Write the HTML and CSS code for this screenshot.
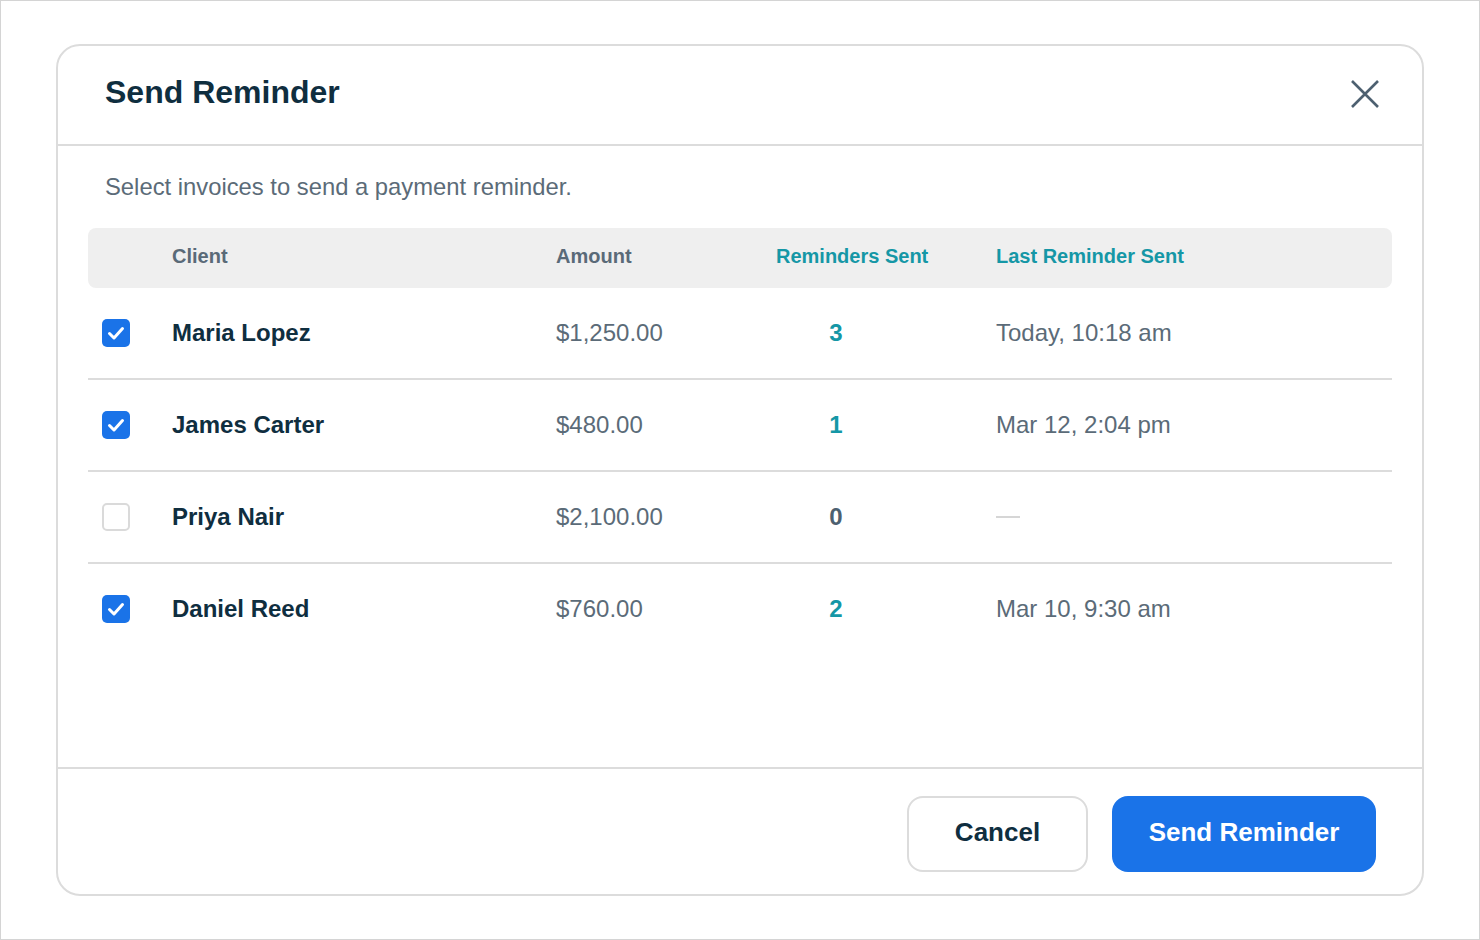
FILE: index.html
```html
<!DOCTYPE html>
<html lang="en">
<head>
  <meta charset="UTF-8" />
  <meta name="viewport" content="width=device-width, initial-scale=1.0"/>
  <title>Send Reminder</title>
  <link rel="stylesheet" href="styles.css">
</head>
<body>

<div class="frame">
  <div class="dialog">
    <div class="dialog-header">
      <h1>Send Reminder</h1>
      <button class="close" aria-label="Close">
        <svg width="30" height="30" viewBox="0 0 30 30"><path d="M2 2 L28 28 M28 2 L2 28" stroke="#4d6070" stroke-width="2.6" fill="none"/></svg>
      </button>
    </div>

    <div class="dialog-body">
      <p class="intro">Select invoices to send a payment reminder.</p>

      <div class="grid">
        <div class="row head">
          <div></div>
          <div>Client</div>
          <div>Amount</div>
          <div class="teal">Reminders Sent</div>
          <div class="teal">Last Reminder Sent</div>
        </div>

        <div class="row">
          <div><span class="check on"><svg width="28" height="28" viewBox="0 0 28 28"><path d="M7.5 14.5 L12 19 L20.5 9.5" stroke="#fff" stroke-width="3" fill="none" stroke-linecap="round" stroke-linejoin="round"/></svg></span></div>
          <div class="name">Maria Lopez</div>
          <div class="amount">$1,250.00</div>
          <div><span class="count">3</span></div>
          <div class="date">Today, 10:18 am</div>
        </div>

        <div class="row">
          <div><span class="check on"><svg width="28" height="28" viewBox="0 0 28 28"><path d="M7.5 14.5 L12 19 L20.5 9.5" stroke="#fff" stroke-width="3" fill="none" stroke-linecap="round" stroke-linejoin="round"/></svg></span></div>
          <div class="name">James Carter</div>
          <div class="amount">$480.00</div>
          <div><span class="count">1</span></div>
          <div class="date">Mar 12, 2:04 pm</div>
        </div>

        <div class="row">
          <div><span class="check"></span></div>
          <div class="name">Priya Nair</div>
          <div class="amount">$2,100.00</div>
          <div><span class="count zero">0</span></div>
          <div class="date"><span class="dash"></span></div>
        </div>

        <div class="row">
          <div><span class="check on"><svg width="28" height="28" viewBox="0 0 28 28"><path d="M7.5 14.5 L12 19 L20.5 9.5" stroke="#fff" stroke-width="3" fill="none" stroke-linecap="round" stroke-linejoin="round"/></svg></span></div>
          <div class="name">Daniel Reed</div>
          <div class="amount">$760.00</div>
          <div><span class="count">2</span></div>
          <div class="date">Mar 10, 9:30 am</div>
        </div>
      </div>
    </div>

    <div class="dialog-footer">
      <button class="btn btn-cancel">Cancel</button>
      <button class="btn btn-primary">Send Reminder</button>
    </div>
  </div>
</div>

</body>
</html>
```

FILE: styles.css
```css
html, body { margin: 0; padding: 0; background: #fff; }
body { font-family: "Liberation Sans", Arial, sans-serif; color: #0f2e3f; }
.frame { width: 1480px; height: 940px; box-sizing: border-box; border: 1px solid #d4d4d4; padding: 43px 55px; }

.dialog { height: 100%; box-sizing: border-box; border: 2px solid #dcdcdc; border-radius: 24px; display: flex; flex-direction: column; }

.dialog-header { height: 92px; border-bottom: 2px solid #dcdcdc; display: flex; align-items: center; justify-content: space-between; padding: 0 42px 6px 47px; }
.dialog-header h1 { margin: 0; font-size: 32px; font-weight: bold; color: #0f2e3f; }
.close { background: none; border: none; padding: 0; margin-top: 4px; width: 30px; height: 30px; cursor: pointer; }
.close svg { display: block; }

.dialog-body { flex: 1; padding: 27px 30px 0 30px; }
.intro { margin: 0 0 27px 17px; font-size: 23.8px; line-height: 28px; color: #5b6b78; }

.row { display: grid; grid-template-columns: 84px 384px 220px 220px 1fr; align-items: center; height: 90px; border-bottom: 2px solid #dcdcdc; }
.row:last-child { border-bottom: none; }
.row.head { height: 56px; padding-bottom: 4px; border-bottom: none; background: #efefef; border-radius: 8px; font-size: 20px; font-weight: bold; color: #5a6a78; }
.row.head .teal { color: #1597a6; }

.check { display: block; width: 28px; height: 28px; box-sizing: border-box; margin-left: 14px; border-radius: 5px; border: 2px solid #dadada; background: #fff; }
.check.on { border: none; background: #1a73e8; }
.check svg { display: block; }

.name { font-size: 24px; font-weight: bold; color: #0f2e3f; }
.amount, .date { font-size: 24px; color: #5b6b78; }
.count { display: block; width: 120px; text-align: center; font-size: 24px; font-weight: bold; color: #1597a6; }
.count.zero { color: #4d6070; }
.dash { display: block; width: 24px; height: 2px; background: #d6d6d6; }

.dialog-footer { border-top: 2px solid #dcdcdc; display: flex; justify-content: flex-end; gap: 24px; padding: 27px 46px 22px 0; }
.btn { height: 76px; padding-bottom: 4px; border-radius: 16px; font-family: inherit; font-size: 26px; font-weight: bold; cursor: pointer; }
.btn-cancel { width: 181px; background: #fff; border: 2px solid #dcdcdc; color: #0f2e3f; }
.btn-primary { width: 264px; background: #1a73e8; border: none; color: #fff; }
```
